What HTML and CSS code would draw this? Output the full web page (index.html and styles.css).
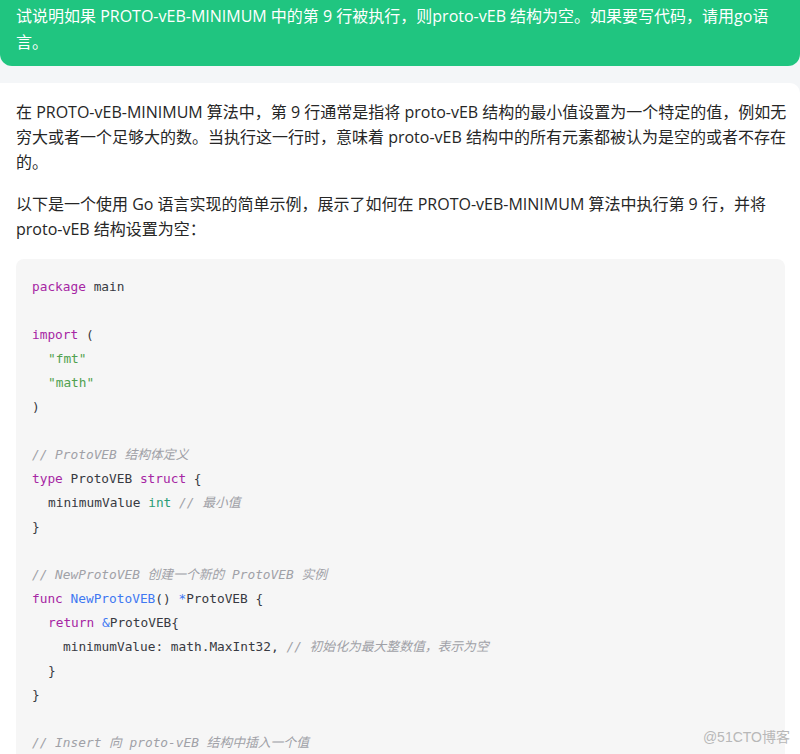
FILE: index.html
```html
<!DOCTYPE html>
<html lang="zh-CN">
<head>
    <meta charset="UTF-8">
    <title>PROTO-vEB-MINIMUM</title>
    <link rel="stylesheet" href="styles.css">
</head>
<body>
    <div class="question">
        试说明如果 PROTO-vEB-MINIMUM 中的第 9 行被执行，则proto-vEB 结构为空。如果要写代码，请用go语言。
    </div>

    <div class="answer">
        <p>在 PROTO-vEB-MINIMUM 算法中，第 9 行通常是指将 proto-vEB 结构的最小值设置为一个特定的值，例如无穷大或者一个足够大的数。当执行这一行时，意味着 proto-vEB 结构中的所有元素都被认为是空的或者不存在的。</p>
        <p class="lead">以下是一个使用 Go 语言实现的简单示例，展示了如何在 PROTO-vEB-MINIMUM 算法中执行第 9 行，并将 proto-vEB 结构设置为空：</p>

        <div class="code">
            <div class="ln"><span class="kw">package</span> main</div>
            <div class="ln"></div>
            <div class="ln"><span class="kw">import</span> (</div>
            <div class="ln i1"><span class="str">"fmt"</span></div>
            <div class="ln i1"><span class="str">"math"</span></div>
            <div class="ln">)</div>
            <div class="ln"></div>
            <div class="ln"><span class="cm">// ProtoVEB 结构体定义</span></div>
            <div class="ln"><span class="kw">type</span> ProtoVEB <span class="kw">struct</span> {</div>
            <div class="ln i1">minimumValue <span class="ty">int</span> <span class="cm">// 最小值</span></div>
            <div class="ln">}</div>
            <div class="ln"></div>
            <div class="ln"><span class="cm">// NewProtoVEB 创建一个新的 ProtoVEB 实例</span></div>
            <div class="ln"><span class="kw">func</span> <span class="fn">NewProtoVEB</span>() <span class="op">*</span>ProtoVEB {</div>
            <div class="ln i1"><span class="kw">return</span> <span class="op">&amp;</span>ProtoVEB{</div>
            <div class="ln i2">minimumValue: math.MaxInt32, <span class="cm">// 初始化为最大整数值，表示为空</span></div>
            <div class="ln i1">}</div>
            <div class="ln">}</div>
            <div class="ln"></div>
            <div class="ln"><span class="cm">// Insert 向 proto-vEB 结构中插入一个值</span></div>
        </div>
    </div>

    <div class="watermark">@51CTO博客</div>
</body>
</html>
```

FILE: styles.css
```css
body {
    margin: 0;
    background-color: #f4f6f8;
    font-family: "Open Sans", "Noto Sans CJK SC", sans-serif;
    color: #262626;
    height: 754px;
    overflow: hidden;
    position: relative;
}
.question {
    background-color: #20c580;
    color: #ffffff;
    font-size: 16px;
    line-height: 26px;
    padding: 3px 30px 11px 16px;
    border-radius: 0 0 12px 12px;
}
.answer {
    background-color: #ffffff;
    margin-top: 17px;
    padding: 17px 11px 0 16px;
    border-radius: 0 10px 0 0;
}
.answer p {
    margin: 0 0 17px 0;
    font-size: 16px;
    line-height: 25px;
}
.answer .lead {
    margin-right: 4px;
}
.code {
    margin: 0 4px 0 0;
    background-color: #f6f6f6;
    border-radius: 8px;
    padding: 16px 16px 40px 16px;
    font-family: "DejaVu Sans Mono", "Liberation Mono", "Noto Sans CJK SC", monospace;
    font-size: 12.8px;
    line-height: 24px;
    color: #383a42;
}
.ln {
    height: 24px;
    white-space: pre;
}
.i1 {
    padding-left: 16px;
}
.i2 {
    padding-left: 31px;
}
.kw {
    color: #a626a4;
}
.str {
    color: #50a14f;
}
.cm {
    color: #a0a1a7;
    font-style: italic;
}
.ty {
    color: #2a9d76;
}
.fn {
    color: #4078f2;
}
.op {
    color: #4078f2;
}
.watermark {
    position: absolute;
    right: 10px;
    bottom: 8px;
    font-size: 14px;
    color: #b8b8b8;
    font-family: "Liberation Sans", "Noto Sans CJK SC", sans-serif;
}
```
